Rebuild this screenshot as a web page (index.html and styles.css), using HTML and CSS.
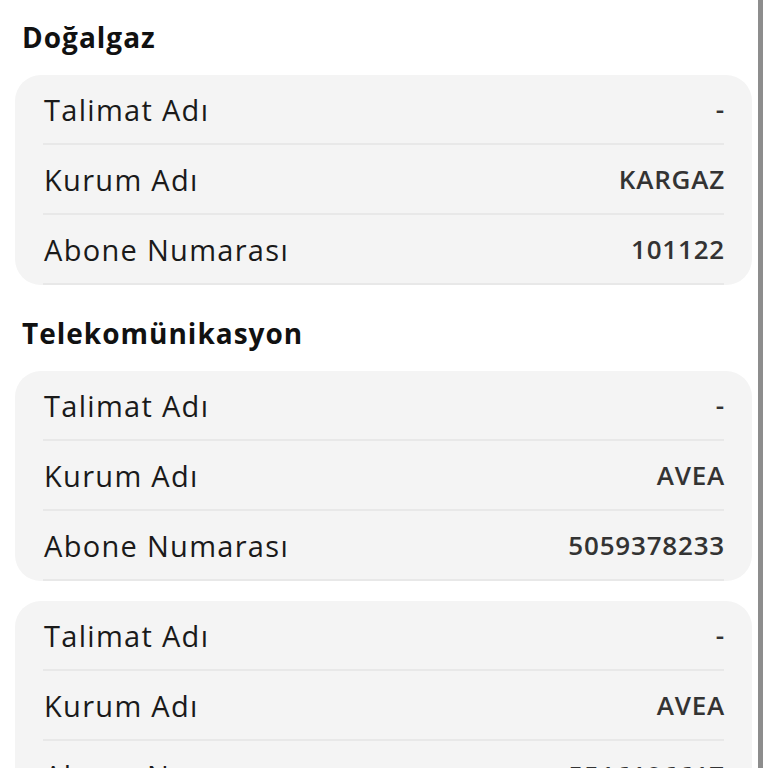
FILE: index.html
```html
<!DOCTYPE html>
<html lang="tr">
<head>
    <meta charset="UTF-8">
    <meta name="viewport" content="width=device-width, initial-scale=1.0">
    <title>Talimatlarım</title>
    <link rel="stylesheet" href="styles.css">
</head>
<body>
    <div class="page">
        <h2 class="group-title">Doğalgaz</h2>
        <div class="card">
            <div class="row"><span class="label">Talimat Adı</span><span class="value">-</span></div>
            <div class="row"><span class="label">Kurum Adı</span><span class="value">KARGAZ</span></div>
            <div class="row"><span class="label">Abone Numarası</span><span class="value">101122</span></div>
        </div>

        <h2 class="group-title">Telekomünikasyon</h2>
        <div class="card">
            <div class="row"><span class="label">Talimat Adı</span><span class="value">-</span></div>
            <div class="row"><span class="label">Kurum Adı</span><span class="value">AVEA</span></div>
            <div class="row"><span class="label">Abone Numarası</span><span class="value">5059378233</span></div>
        </div>
        <div class="card">
            <div class="row"><span class="label">Talimat Adı</span><span class="value">-</span></div>
            <div class="row"><span class="label">Kurum Adı</span><span class="value">AVEA</span></div>
            <div class="row"><span class="label">Abone Numarası</span><span class="value">5516196617</span></div>
        </div>
    </div>
</body>
</html>
```

FILE: styles.css
```css
body {
    margin: 0;
    background: white;
    font-family: "Open Sans", "DejaVu Sans", sans-serif;
    color: #1a1a1a;
    overflow: hidden;
}
.page {
    min-height: 100vh;
    margin-right: 5px;
    border-right: 5px solid #8d8d8d;
    padding: 17px 6px 0 15px;
    box-sizing: border-box;
}
.group-title {
    font-size: 28px;
    font-weight: 700;
    line-height: 40px;
    letter-spacing: 1px;
    margin: 0 0 18px 7px;
    color: #111;
}
.card + .group-title {
    margin-top: 28px;
}
.card {
    background: #f4f4f4;
    border-radius: 26px;
    padding: 0 28px;
    margin-bottom: 20px;
}
.row {
    display: flex;
    justify-content: space-between;
    align-items: center;
    height: 70px;
    box-sizing: border-box;
    border-bottom: 2px solid #e8e8e8;
}
.label {
    font-size: 29px;
    letter-spacing: 1.3px;
    padding-left: 1px;
}
.value {
    font-size: 26px;
    font-weight: 600;
    letter-spacing: 0.8px;
    color: #333;
    margin-right: -1px;
}
```
